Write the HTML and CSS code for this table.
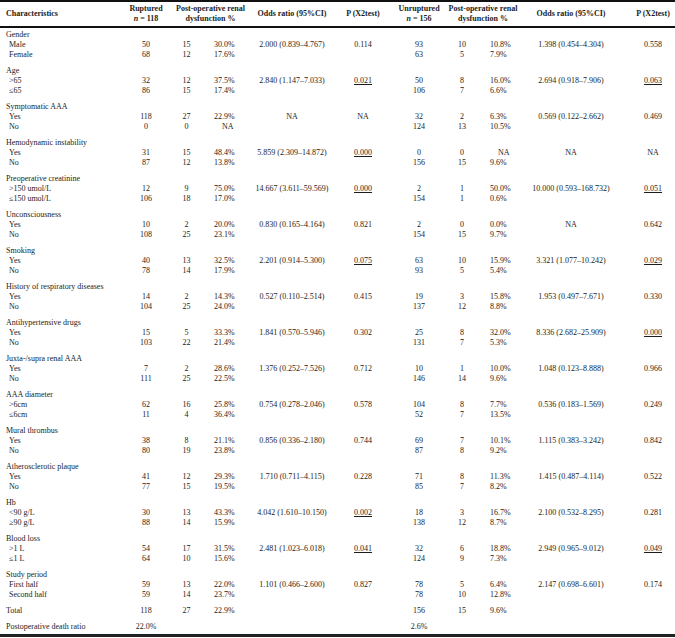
FILE: index.html
```html
<!DOCTYPE html>
<html>
<head>
<meta charset="utf-8">
<link rel="stylesheet" href="styles.css">
</head>
<body>
<table class="tbl">
<colgroup>
<col class="w1"><col class="w2"><col class="w3"><col class="w4"><col class="w5"><col class="w6"><col class="w7"><col class="w8"><col class="w9"><col class="w10"><col class="w11">
</colgroup>
<thead>
<tr>
<th class="lab">Characteristics</th>
<th>Ruptured<br><i>n</i> = 118</th>
<th colspan="2" class="pod">Post-operative renal<br>dysfunction %</th>
<th>Odds ratio (95%CI)</th>
<th>P (X2test)</th>
<th>Unruptured<br><i>n</i> = 156</th>
<th colspan="2" class="pod2">Post-operative renal<br>dysfunction %</th>
<th>Odds ratio (95%CI)</th>
<th class="p2">P (X2test)</th>
</tr>
</thead>
<tbody>
<tr class="first"><td class="grp" colspan="11">Gender</td></tr>
<tr><td class="sub">Male</td><td>50</td><td>15</td><td class="pc">30.0%</td><td>2.000 (0.839–4.767)</td><td>0.114</td><td>93</td><td>10</td><td class="pc2">10.8%</td><td>1.398 (0.454–4.304)</td><td class="p2">0.558</td></tr>
<tr class="end"><td class="sub">Female</td><td>68</td><td>12</td><td class="pc">17.6%</td><td></td><td></td><td>63</td><td>5</td><td class="pc2">7.9%</td><td></td><td class="p2"></td></tr>

<tr><td class="grp" colspan="11">Age</td></tr>
<tr><td class="sub">&gt;65</td><td>32</td><td>12</td><td class="pc">37.5%</td><td>2.840 (1.147–7.033)</td><td><u>0.021</u></td><td>50</td><td>8</td><td class="pc2">16.0%</td><td>2.694 (0.918–7.906)</td><td class="p2"><u>0.063</u></td></tr>
<tr class="end"><td class="sub">≤65</td><td>86</td><td>15</td><td class="pc">17.4%</td><td></td><td></td><td>106</td><td>7</td><td class="pc2">6.6%</td><td></td><td class="p2"></td></tr>

<tr><td class="grp" colspan="11">Symptomatic AAA</td></tr>
<tr><td class="sub">Yes</td><td>118</td><td>27</td><td class="pc">22.9%</td><td>NA</td><td>NA</td><td>32</td><td>2</td><td class="pc2">6.3%</td><td>0.569 (0.122–2.662)</td><td class="p2">0.469</td></tr>
<tr class="end"><td class="sub">No</td><td>0</td><td>0</td><td class="pc na">NA</td><td></td><td></td><td>124</td><td>13</td><td class="pc2">10.5%</td><td></td><td class="p2"></td></tr>

<tr><td class="grp" colspan="11">Hemodynamic instability</td></tr>
<tr><td class="sub">Yes</td><td>31</td><td>15</td><td class="pc">48.4%</td><td>5.859 (2.309–14.872)</td><td><u>0.000</u></td><td>0</td><td>0</td><td class="pc2 na">NA</td><td>NA</td><td class="p2">NA</td></tr>
<tr class="end"><td class="sub">No</td><td>87</td><td>12</td><td class="pc">13.8%</td><td></td><td></td><td>156</td><td>15</td><td class="pc2">9.6%</td><td></td><td class="p2"></td></tr>

<tr><td class="grp" colspan="11">Preoperative creatinine</td></tr>
<tr><td class="sub">&gt;150 umol/L</td><td>12</td><td>9</td><td class="pc">75.0%</td><td>14.667 (3.611–59.569)</td><td><u>0.000</u></td><td>2</td><td>1</td><td class="pc2">50.0%</td><td>10.000 (0.593–168.732)</td><td class="p2"><u>0.051</u></td></tr>
<tr class="end"><td class="sub">≤150 umol/L</td><td>106</td><td>18</td><td class="pc">17.0%</td><td></td><td></td><td>154</td><td>1</td><td class="pc2">0.6%</td><td></td><td class="p2"></td></tr>

<tr><td class="grp" colspan="11">Unconsciousness</td></tr>
<tr><td class="sub">Yes</td><td>10</td><td>2</td><td class="pc">20.0%</td><td>0.830 (0.165–4.164)</td><td>0.821</td><td>2</td><td>0</td><td class="pc2">0.0%</td><td>NA</td><td class="p2">0.642</td></tr>
<tr class="end"><td class="sub">No</td><td>108</td><td>25</td><td class="pc">23.1%</td><td></td><td></td><td>154</td><td>15</td><td class="pc2">9.7%</td><td></td><td class="p2"></td></tr>

<tr><td class="grp" colspan="11">Smoking</td></tr>
<tr><td class="sub">Yes</td><td>40</td><td>13</td><td class="pc">32.5%</td><td>2.201 (0.914–5.300)</td><td><u>0.075</u></td><td>63</td><td>10</td><td class="pc2">15.9%</td><td>3.321 (1.077–10.242)</td><td class="p2"><u>0.029</u></td></tr>
<tr class="end"><td class="sub">No</td><td>78</td><td>14</td><td class="pc">17.9%</td><td></td><td></td><td>93</td><td>5</td><td class="pc2">5.4%</td><td></td><td class="p2"></td></tr>

<tr><td class="grp" colspan="11">History of respiratory diseases</td></tr>
<tr><td class="sub">Yes</td><td>14</td><td>2</td><td class="pc">14.3%</td><td>0.527 (0.110–2.514)</td><td>0.415</td><td>19</td><td>3</td><td class="pc2">15.8%</td><td>1.953 (0.497–7.671)</td><td class="p2">0.330</td></tr>
<tr class="end"><td class="sub">No</td><td>104</td><td>25</td><td class="pc">24.0%</td><td></td><td></td><td>137</td><td>12</td><td class="pc2">8.8%</td><td></td><td class="p2"></td></tr>

<tr><td class="grp" colspan="11">Antihypertensive drugs</td></tr>
<tr><td class="sub">Yes</td><td>15</td><td>5</td><td class="pc">33.3%</td><td>1.841 (0.570–5.946)</td><td>0.302</td><td>25</td><td>8</td><td class="pc2">32.0%</td><td>8.336 (2.682–25.909)</td><td class="p2"><u>0.000</u></td></tr>
<tr class="end"><td class="sub">No</td><td>103</td><td>22</td><td class="pc">21.4%</td><td></td><td></td><td>131</td><td>7</td><td class="pc2">5.3%</td><td></td><td class="p2"></td></tr>

<tr><td class="grp" colspan="11">Juxta-/supra renal AAA</td></tr>
<tr><td class="sub">Yes</td><td>7</td><td>2</td><td class="pc">28.6%</td><td>1.376 (0.252–7.526)</td><td>0.712</td><td>10</td><td>1</td><td class="pc2">10.0%</td><td>1.048 (0.123–8.888)</td><td class="p2">0.966</td></tr>
<tr class="end"><td class="sub">No</td><td>111</td><td>25</td><td class="pc">22.5%</td><td></td><td></td><td>146</td><td>14</td><td class="pc2">9.6%</td><td></td><td class="p2"></td></tr>

<tr><td class="grp" colspan="11">AAA diameter</td></tr>
<tr><td class="sub">&gt;6cm</td><td>62</td><td>16</td><td class="pc">25.8%</td><td>0.754 (0.278–2.046)</td><td>0.578</td><td>104</td><td>8</td><td class="pc2">7.7%</td><td>0.536 (0.183–1.569)</td><td class="p2">0.249</td></tr>
<tr class="end"><td class="sub">≤6cm</td><td>11</td><td>4</td><td class="pc">36.4%</td><td></td><td></td><td>52</td><td>7</td><td class="pc2">13.5%</td><td></td><td class="p2"></td></tr>

<tr><td class="grp" colspan="11">Mural thrombus</td></tr>
<tr><td class="sub">Yes</td><td>38</td><td>8</td><td class="pc">21.1%</td><td>0.856 (0.336–2.180)</td><td>0.744</td><td>69</td><td>7</td><td class="pc2">10.1%</td><td>1.115 (0.383–3.242)</td><td class="p2">0.842</td></tr>
<tr class="end"><td class="sub">No</td><td>80</td><td>19</td><td class="pc">23.8%</td><td></td><td></td><td>87</td><td>8</td><td class="pc2">9.2%</td><td></td><td class="p2"></td></tr>

<tr><td class="grp" colspan="11">Atherosclerotic plaque</td></tr>
<tr><td class="sub">Yes</td><td>41</td><td>12</td><td class="pc">29.3%</td><td>1.710 (0.711–4.115)</td><td>0.228</td><td>71</td><td>8</td><td class="pc2">11.3%</td><td>1.415 (0.487–4.114)</td><td class="p2">0.522</td></tr>
<tr class="end"><td class="sub">No</td><td>77</td><td>15</td><td class="pc">19.5%</td><td></td><td></td><td>85</td><td>7</td><td class="pc2">8.2%</td><td></td><td class="p2"></td></tr>

<tr><td class="grp" colspan="11">Hb</td></tr>
<tr><td class="sub">&lt;90 g/L</td><td>30</td><td>13</td><td class="pc">43.3%</td><td>4.042 (1.610–10.150)</td><td><u>0.002</u></td><td>18</td><td>3</td><td class="pc2">16.7%</td><td>2.100 (0.532–8.295)</td><td class="p2">0.281</td></tr>
<tr class="end"><td class="sub">≥90 g/L</td><td>88</td><td>14</td><td class="pc">15.9%</td><td></td><td></td><td>138</td><td>12</td><td class="pc2">8.7%</td><td></td><td class="p2"></td></tr>

<tr><td class="grp" colspan="11">Blood loss</td></tr>
<tr><td class="sub">&gt;1 L</td><td>54</td><td>17</td><td class="pc">31.5%</td><td>2.481 (1.023–6.018)</td><td><u>0.041</u></td><td>32</td><td>6</td><td class="pc2">18.8%</td><td>2.949 (0.965–9.012)</td><td class="p2"><u>0.049</u></td></tr>
<tr class="end"><td class="sub">≤1 L</td><td>64</td><td>10</td><td class="pc">15.6%</td><td></td><td></td><td>124</td><td>9</td><td class="pc2">7.3%</td><td></td><td class="p2"></td></tr>

<tr><td class="grp" colspan="11">Study period</td></tr>
<tr><td class="sub">First half</td><td>59</td><td>13</td><td class="pc">22.0%</td><td>1.101 (0.466–2.600)</td><td>0.827</td><td>78</td><td>5</td><td class="pc2">6.4%</td><td>2.147 (0.698–6.601)</td><td class="p2">0.174</td></tr>
<tr class="end"><td class="sub">Second half</td><td>59</td><td>14</td><td class="pc">23.7%</td><td></td><td></td><td>78</td><td>10</td><td class="pc2">12.8%</td><td></td><td class="p2"></td></tr>

<tr class="end"><td class="grp">Total</td><td>118</td><td>27</td><td class="pc">22.9%</td><td></td><td></td><td>156</td><td>15</td><td class="pc2">9.6%</td><td></td><td class="p2"></td></tr>
<tr class="last"><td class="grp">Postoperative death ratio</td><td>22.0%</td><td></td><td></td><td></td><td></td><td>2.6%</td><td></td><td></td><td></td><td class="p2"></td></tr>
</tbody>
</table>
</body>
</html>
```
FILE: styles.css
```css
html, body {
  margin: 0;
  padding: 0;
  background: #ffffff;
}
body {
  font-family: "Liberation Serif", "Times New Roman", serif;
  font-size: 8px;
  color: #1c1c1c;
}
.tbl {
  width: 675px;
  table-layout: fixed;
  border-collapse: collapse;
  border-top: 2px solid #111;
  border-bottom: 3px solid #222;
}
.w1 { width: 121px; }
.w2 { width: 50px; }
.w3 { width: 31px; }
.w4 { width: 48px; }
.w5 { width: 84px; }
.w6 { width: 58px; }
.w7 { width: 54px; }
.w8 { width: 32px; }
.w9 { width: 52px; }
.w10 { width: 82px; }
.w11 { width: 63px; }

.tbl th, .tbl td {
  padding: 0;
  line-height: 10px;
  white-space: nowrap;
  text-align: center;
  vertical-align: top;
}
.tbl thead th {
  font-weight: bold;
  padding: 2px 0;
  vertical-align: middle;
  border-bottom: 2px solid #111;
}
.tbl thead th.lab {
  text-align: left;
  padding-left: 6px;
}
.tbl thead th.pod2 {
  padding-right: 10px;
}
.tbl td.grp {
  text-align: left;
  padding-left: 6px;
}
.tbl td.sub {
  text-align: left;
  padding-left: 9px;
}
.tbl td.pc {
  text-align: left;
  padding-left: 12px;
}
.tbl td.pc2 {
  text-align: left;
  padding-left: 12px;
}
.tbl td.na {
  padding-left: 20px;
}
.tbl .p2 {
  padding-left: 19px;
}
.tbl tr.first td {
  padding-top: 2px;
}
.tbl tr.end td {
  padding-bottom: 6px;
}
.tbl tr.last td {
  padding-bottom: 2px;
}
u {
  text-decoration: underline;
  text-underline-offset: 1px;
}
```
